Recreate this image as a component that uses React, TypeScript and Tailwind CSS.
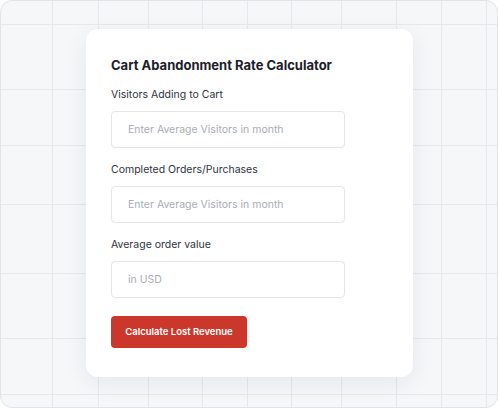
const vLines = [51, 97, 147, 201, 246, 290, 340, 395, 440, 485];
const hLines = [23, 88, 144, 203, 272, 337, 393];

function Field({ label, placeholder }: { label: string; placeholder: string }) {
  return (
    <div className="flex flex-col">
      <label className="text-[10.5px] leading-[14px] text-[#2f3440]">{label}</label>
      <input
        type="text"
        placeholder={placeholder}
        className="mt-[9px] h-[37px] w-[234px] rounded-[4px] border border-[#e3e5e9] bg-white px-[16px] text-[10.5px] text-[#2f3440] outline-none placeholder:text-[#a9adb6]"
      />
    </div>
  );
}

export default function App() {
  return (
    <div className="h-[408px] w-[498px] bg-white font-['Inter',sans-serif]">
      <div className="relative h-[408px] w-[498px] overflow-hidden rounded-[12px] border border-[#e1e3e7] bg-[#f6f7f9]">
        <svg className="absolute inset-0" width="498" height="408">
          {vLines.map((x) => (
            <line key={"v" + x} x1={x + 0.5} y1={0} x2={x + 0.5} y2={408} stroke="#e7e8ec" strokeWidth={1} />
          ))}
          {hLines.map((y) => (
            <line key={"h" + y} x1={0} y1={y + 0.5} x2={498} y2={y + 0.5} stroke="#e7e8ec" strokeWidth={1} />
          ))}
        </svg>
        <div className="relative ml-[85px] mt-[28px] h-[348px] w-[327px] rounded-[12px] bg-white px-[25px] pt-[28px] shadow-[0_6px_24px_rgba(30,35,50,0.07)]">
          <h1 className="text-[13px] font-bold leading-[16px] text-[#1c202a]">Cart Abandonment Rate Calculator</h1>
          <div className="mt-[15px] flex flex-col gap-[15px]">
            <Field label="Visitors Adding to Cart" placeholder="Enter Average Visitors in month" />
            <Field label="Completed Orders/Purchases" placeholder="Enter Average Visitors in month" />
            <Field label="Average order value" placeholder="in USD" />
          </div>
          <button className="mt-[18px] h-[32px] w-[136px] rounded-[4px] bg-[#cc372c] text-[9.5px] font-semibold text-white">
            Calculate Lost Revenue
          </button>
        </div>
      </div>
    </div>
  );
}
